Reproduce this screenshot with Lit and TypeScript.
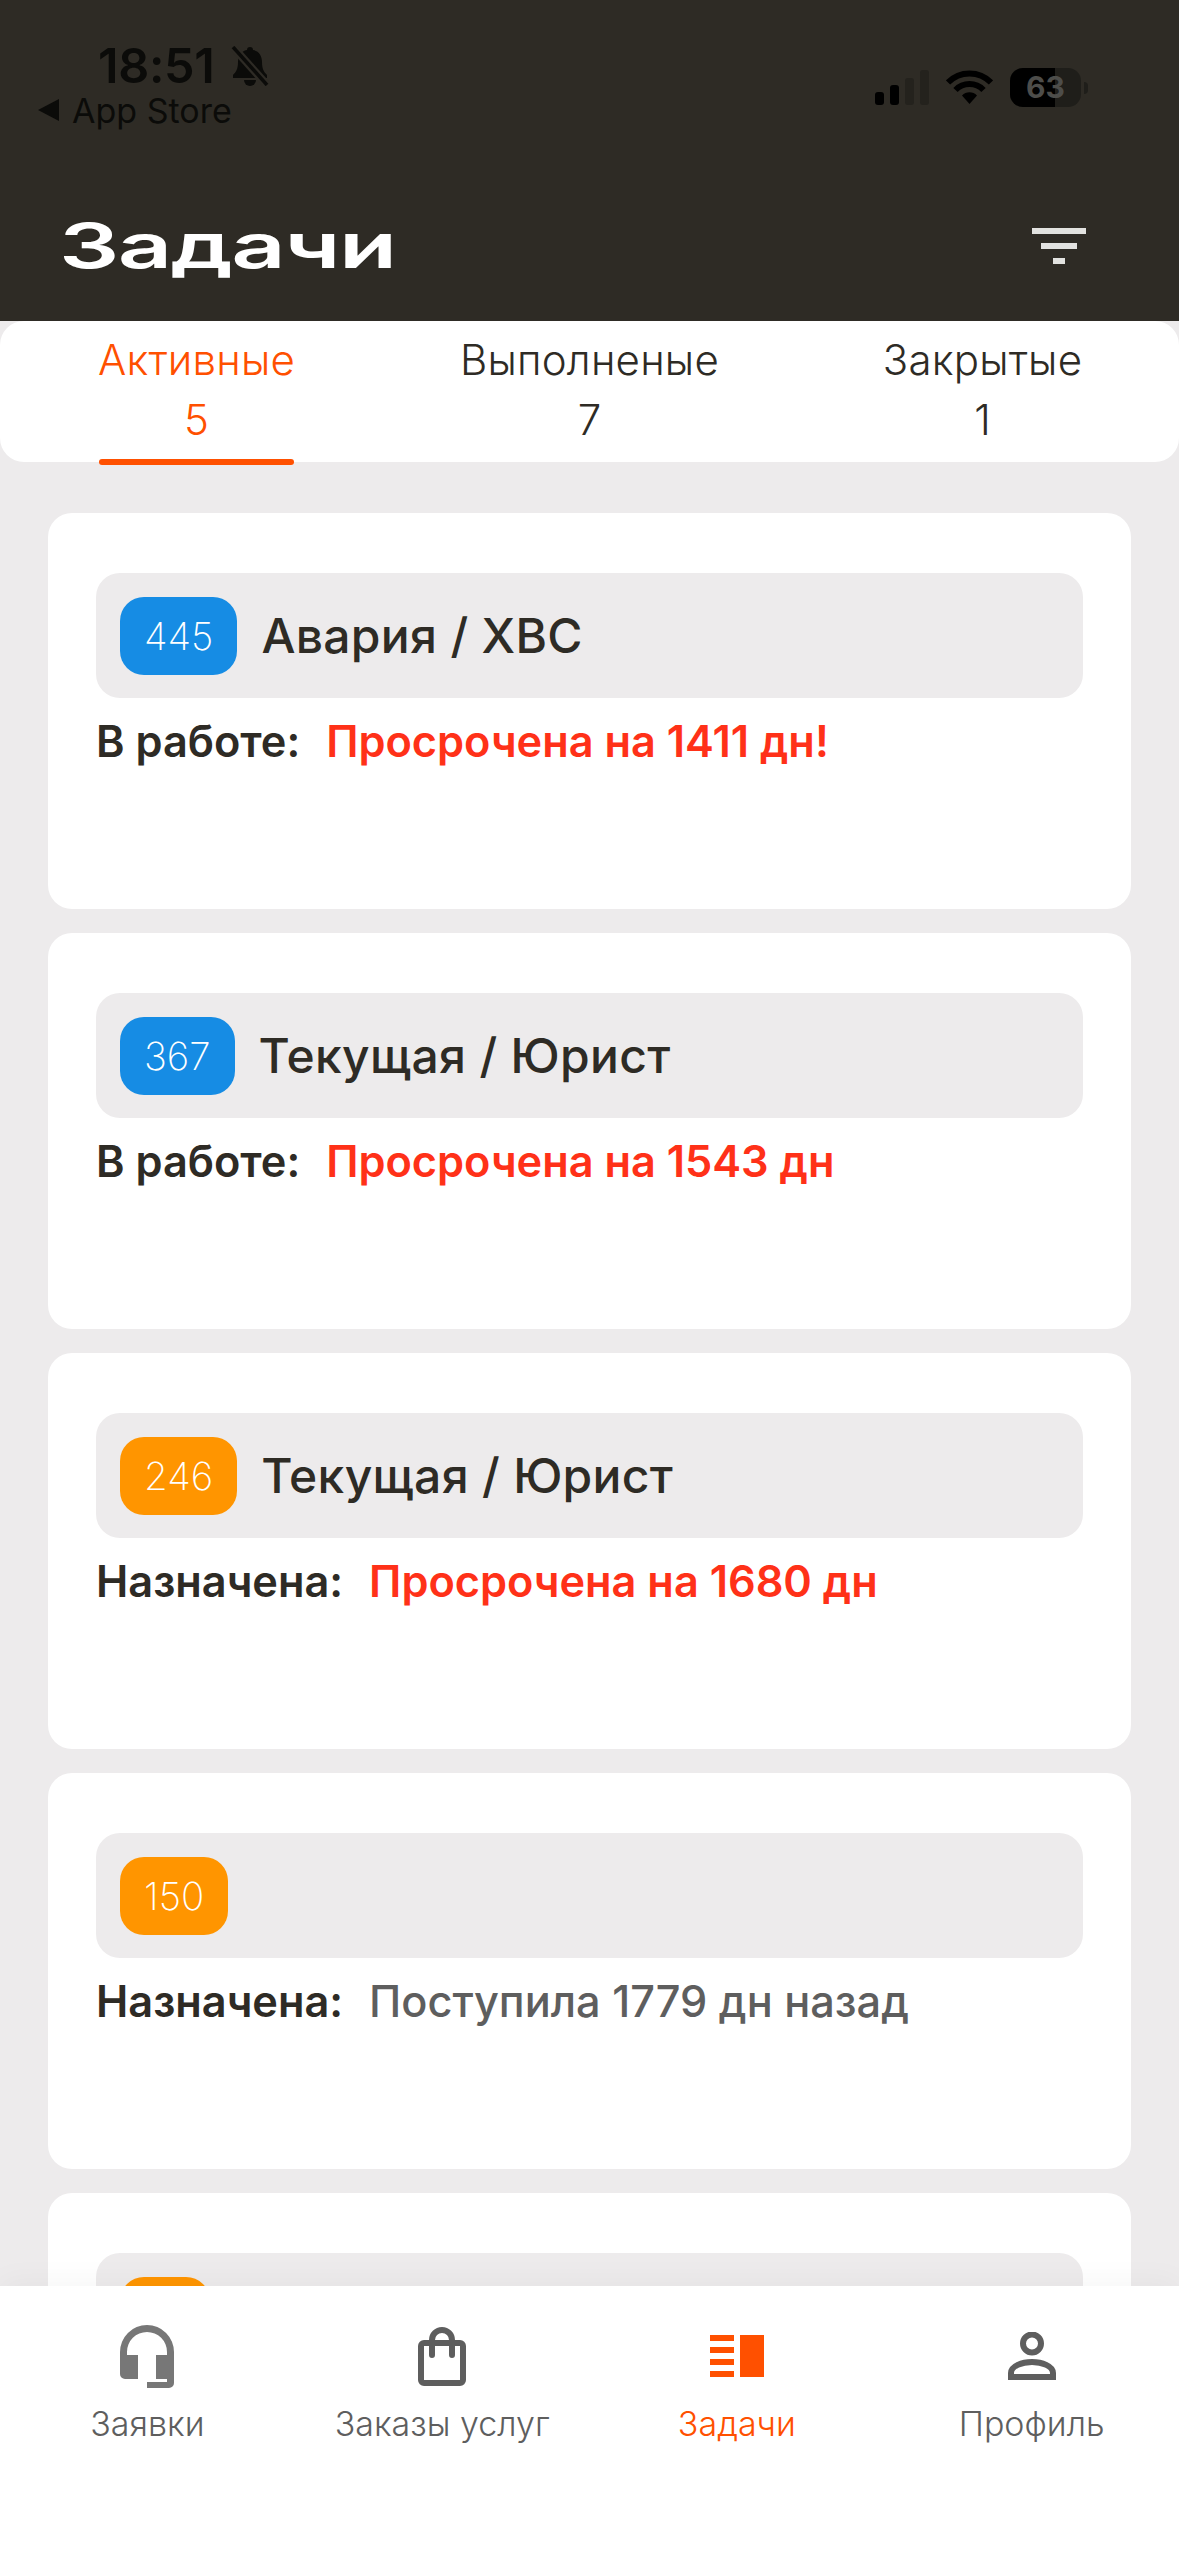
import { LitElement, html, css } from "lit";
import { customElement } from "lit/decorators.js";

type Card = { id: string; color: string; title: string; label: string; value: string; late: boolean };

const cards: Card[] = [
  { id: "445", color: "blue", title: "Авария / ХВС", label: "В работе:", value: "Просрочена на 1411 дн!", late: true },
  { id: "367", color: "blue", title: "Текущая / Юрист", label: "В работе:", value: "Просрочена на 1543 дн", late: true },
  { id: "246", color: "orange", title: "Текущая / Юрист", label: "Назначена:", value: "Просрочена на 1680 дн", late: true },
  { id: "150", color: "orange", title: "", label: "Назначена:", value: "Поступила 1779 дн назад", late: false },
];

@customElement("app-root")
export class AppRoot extends LitElement {
  static styles = css`
    :host { display: block; width: 1179px; height: 2556px; overflow: hidden; font-family: Inter, "Noto Sans", sans-serif; background: #edebec; }
    .page { display: flex; flex-direction: column; height: 2556px; }
    header { height: 321px; flex: none; background: #2e2b25; box-sizing: border-box; padding-top: 43px; display: flex; flex-direction: column; }
    .status { display: flex; justify-content: space-between; height: 90px; }
    .status-left { display: flex; flex-direction: column; }
    .time-row { display: flex; align-items: center; gap: 16px; padding-left: 98px; height: 46px; font-size: 48.500px; font-weight: 600; color: #0b0b09; line-height: 46px; letter-spacing: -0.3px; }
    .store-row { display: flex; align-items: center; gap: 13px; padding-left: 38px; height: 42px; font-size: 34px; font-weight: 400; color: #0b0b09; }
    .status-right { display: flex; align-items: flex-start; padding: 27px 91px 0 0; gap: 17px; }
    .battery { position: relative; width: 71px; height: 39px; border-radius: 13px; background: #1f1e1a; overflow: hidden; font-size: 30px; font-weight: 700; color: #4d4d4a; text-align: center; line-height: 39px; }
    .battery-fill { position: absolute; left: 0; top: 0; bottom: 0; width: 45px; background: #000; }
    .battery span { position: relative; }
    .battery-wrap { display: flex; align-items: center; gap: 3px; margin-top: -2px; }
    .cap { width: 4px; height: 12px; background: #1f1e1a; border-radius: 0 6px 6px 0; }
    .title-row { display: flex; justify-content: space-between; align-items: center; padding: 0 93px 0 59px; margin-top: 83px; height: 60px; }
    .title { font-size: 62px; font-weight: 600; color: #fff; transform: scaleX(1.53); transform-origin: left center; line-height: 60px; letter-spacing: -1px; }
    .tabs { flex: none; height: 141px; background: #fff; border-radius: 24px; display: grid; grid-template-columns: repeat(3, 1fr); }
    .tab { display: flex; flex-direction: column; align-items: center; color: #2e2b25; font-size: 42px; font-weight: 300; letter-spacing: 0.2px; }
    .tab-inner { display: flex; flex-direction: column; align-items: center; height: 144px; box-sizing: border-box; padding-top: 16px; }
    .tab-line { line-height: 46px; }
    .tab-line + .tab-line { margin-top: 14px; }
    .tab.active { color: #ff5000; }
    .bar { margin-top: auto; width: calc(100% - 2px); height: 6px; border-radius: 3px; background: #ff5000; }
    main { flex: 1; min-height: 0; overflow: hidden; padding: 51px 48px 0; display: flex; flex-direction: column; gap: 24px; }
    .card { flex: none; height: 396px; background: #fff; border-radius: 24px; box-sizing: border-box; padding: 60px 48px 0; }
    .card-head { height: 125px; background: #edebec; border-radius: 24px; display: flex; align-items: center; gap: 24px; padding: 0 24px; }
    .badge { height: 78px; min-width: 90px; box-sizing: border-box; padding: 0 24px; border-radius: 24px; display: flex; align-items: center; justify-content: center; color: #fff; font-size: 38.500px; font-weight: 250; }
    .badge.blue { background: #168ce4; }
    .badge.orange { background: #ff9500; }
    .card-title { font-size: 48px; font-weight: 550; color: #2e2b25; letter-spacing: 0.3px; }
    .state { display: flex; gap: 26px; margin-top: 16px; font-size: 43.300px; line-height: 54px; font-weight: 600; color: #2e2b25; }
    .late { color: #ff3118; }
    .ago { color: #5e5e5e; font-weight: 500; }
    nav { flex: none; height: 270px; background: #fff; display: grid; grid-template-columns: repeat(4, 1fr); box-shadow: 0 -6px 28px rgba(0, 0, 0, 0.035); position: relative; }
    .item { display: flex; flex-direction: column; align-items: center; padding-top: 35px; color: #5e5e5e; font-size: 34px; font-weight: 350; }
    .item.active { color: #ff5000; }
    .icon { height: 70px; display: flex; align-items: center; }
    .item-label { margin-top: 11px; line-height: 44px; }
    svg { display: block; }
  `;

  render() {
    return html`<div class="page">
      <header>
        <div class="status">
          <div class="status-left">
            <div class="time-row">18:51
              <svg width="38" height="40" viewBox="0 0 38 40" fill="#0b0b09">
                <path d="M19 1c2 0 3 1 3 3 6 1 9 6 9 12 0 7 2 10 5 13v3H2v-3c3-3 5-6 5-13 0-6 3-11 9-12 0-2 1-3 3-3z"/>
                <path d="M13 34h12a6 6 0 0 1-12 0z"/>
                <path d="M2 1l34 38" stroke="#2e2b25" stroke-width="8"/>
                <path d="M2 1l34 38" stroke="#0b0b09" stroke-width="3.500"/>
              </svg>
            </div>
            <div class="store-row">
              <svg width="21" height="22" viewBox="0 0 21 22" fill="#0b0b09"><path d="M21 0v22L0 11z"/></svg>
              App Store
            </div>
          </div>
          <div class="status-right">
            <svg width="54" height="35" viewBox="0 0 54 35">
              <rect x="0" y="22" width="9" height="13" rx="3" fill="#000"/>
              <rect x="15" y="15" width="9" height="20" rx="3" fill="#000"/>
              <rect x="30" y="8" width="9" height="27" rx="3" fill="#24221d"/>
              <rect x="45" y="0" width="9" height="35" rx="3" fill="#24221d"/>
            </svg>
            <svg width="47" height="35" viewBox="0 0 47 35" fill="none" stroke="#000" stroke-width="6">
              <path d="M2 12.500a30 30 0 0 1 43 0"/>
              <path d="M9.500 20a19.500 19.500 0 0 1 28 0"/>
              <path d="M16 25.500a10.500 10.500 0 0 1 15 0L23.500 34z" fill="#000" stroke="none"/>
            </svg>
            <div class="battery-wrap">
              <div class="battery"><div class="battery-fill"></div><span>63</span></div>
              <div class="cap"></div>
            </div>
          </div>
        </div>
        <div class="title-row">
          <div class="title">Задачи</div>
          <svg width="54" height="36" viewBox="0 0 54 36" fill="#e2e2e0">
            <rect x="0" y="0" width="54" height="6"/>
            <rect x="9" y="15" width="36" height="6"/>
            <rect x="21" y="30" width="12" height="6"/>
          </svg>
        </div>
      </header>
      <div class="tabs">
        <div class="tab active"><div class="tab-inner"><div class="tab-line">Активные</div><div class="tab-line">5</div><div class="bar"></div></div></div>
        <div class="tab"><div class="tab-inner"><div class="tab-line">Выполненые</div><div class="tab-line">7</div></div></div>
        <div class="tab"><div class="tab-inner"><div class="tab-line">Закрытые</div><div class="tab-line">1</div></div></div>
      </div>
      <main>
        ${cards.map(
          (c) => html`<div class="card">
            <div class="card-head">
              <div class="badge ${c.color}">${c.id}</div>
              ${c.title ? html`<div class="card-title">${c.title}</div>` : ""}
            </div>
            <div class="state"><span>${c.label}</span><span class="${c.late ? "late" : "ago"}">${c.value}</span></div>
          </div>`
        )}
        <div class="card">
          <div class="card-head"><div class="badge orange"></div></div>
        </div>
      </main>
      <nav>
        <div class="item">
          <div class="icon"><svg width="54" height="63" viewBox="0 0 54 63" fill="#777"><path d="M0 27A27 27 0 0 1 54 27V58A5 5 0 0 1 49 63H27V57H47V54H36V30H47V27A20 20 0 0 0 7 27V30H18V54H5A5 5 0 0 1 0 49Z"/></svg></div>
          <div class="item-label">Заявки</div>
        </div>
        <div class="item">
          <div class="icon"><svg width="48" height="59" viewBox="0 0 48 59" fill="none" stroke="#5e5e5e" stroke-width="6" stroke-linecap="round"><rect x="3" y="16" width="42" height="40" rx="3"/><path d="M14 28V13a10 10 0 0 1 20 0V28"/></svg></div>
          <div class="item-label">Заказы услуг</div>
        </div>
        <div class="item active">
          <div class="icon"><svg width="54" height="42" viewBox="0 0 54 42" fill="#ff5000"><rect y="0" width="24" height="6"/><rect y="12" width="24" height="6"/><rect y="24" width="24" height="6"/><rect y="36" width="24" height="6"/><rect x="30" y="0" width="24" height="42"/></svg></div>
          <div class="item-label">Задачи</div>
        </div>
        <div class="item">
          <div class="icon"><svg width="48" height="48" viewBox="0 0 48 48" fill="none" stroke="#5e5e5e" stroke-width="6"><circle cx="24" cy="11.500" r="9"/><path d="M3 45V41C3 34 14 30 24 30S45 34 45 41V45Z"/></svg></div>
          <div class="item-label">Профиль</div>
        </div>
      </nav>
    </div>`;
  }
}
